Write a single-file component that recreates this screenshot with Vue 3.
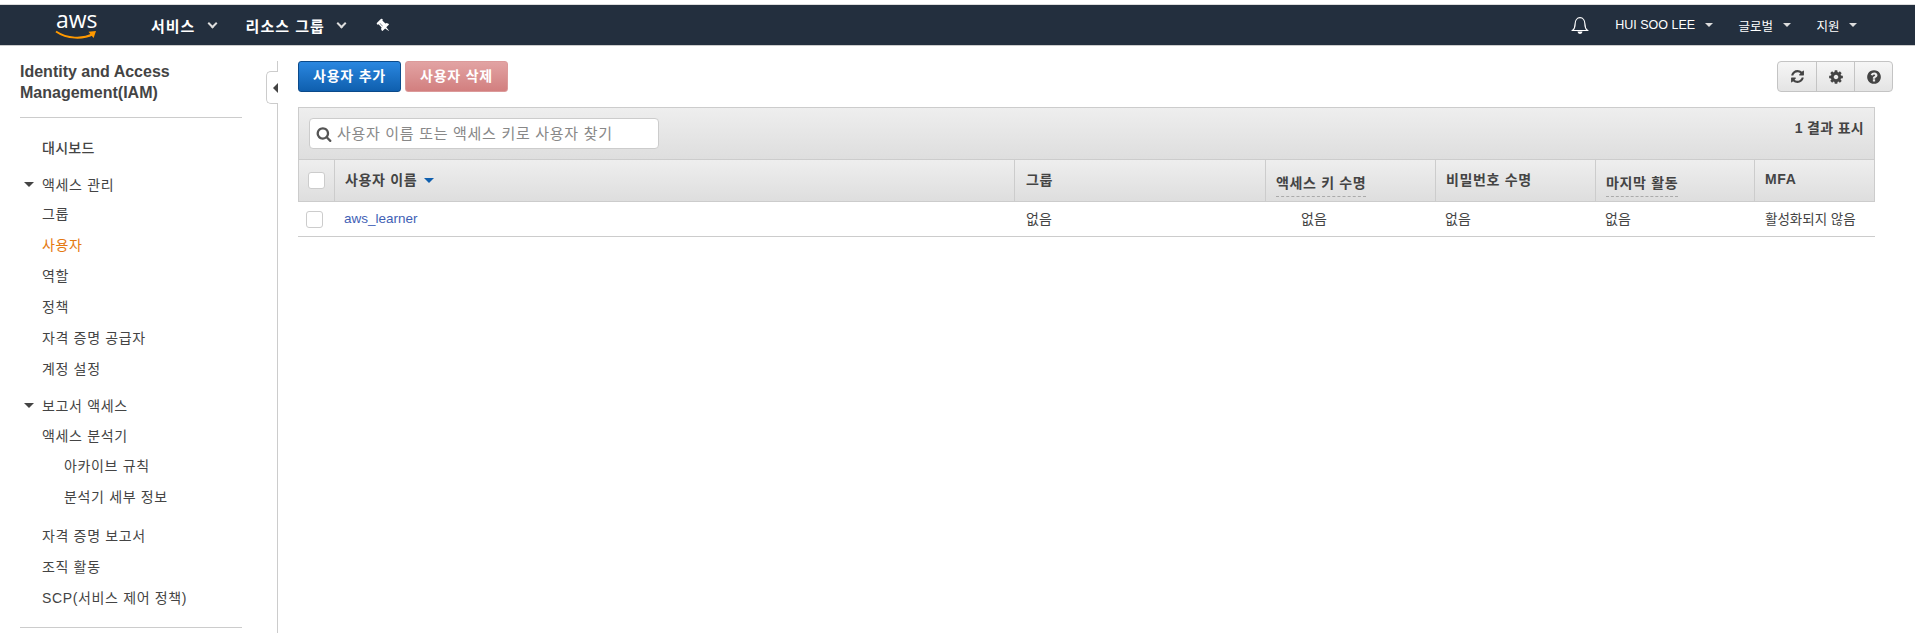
<template>
  <div class="page">
    <header class="topbar">
      <div class="logo">
        <span class="logo-text">aws</span>
        <svg class="logo-smile" viewBox="0 0 42 10" width="42" height="10">
          <path d="M1 1.5C12 9 28 9.5 38 4" fill="none" stroke="#f90" stroke-width="2" />
          <path d="M33.5 1.8L41 1l-2.4 7z" fill="#f90" />
        </svg>
      </div>
      <a class="nav-link strong services">서비스 <i class="chevron"></i></a>
      <a class="nav-link strong groups">리소스 그룹 <i class="chevron"></i></a>
      <svg class="pin" viewBox="0 0 1792 1792" width="15" height="15">
        <path
          transform="rotate(-45 896 896)"
          fill="#fff"
          d="M800 864v-448q0-14-9-23t-23-9-23 9-9 23v448q0 14 9 23t23 9 23-9 9-23zm672 352q0 26-19 45t-45 19h-429l-51 483q-2 12-10.5 20.5t-20.5 8.5h-1q-27 0-32-27l-76-485h-404q-26 0-45-19t-19-45q0-123 78.5-221.5t177.5-98.5v-512q-52 0-90-38t-38-90 38-90 90-38h640q52 0 90 38t38 90-38 90-90 38v512q99 0 177.5 98.5t78.5 221.5z"
        />
      </svg>
      <div class="topbar-right">
        <svg class="bell" viewBox="0 0 18 20" width="18" height="20">
          <path d="M1.5 15.5c2-1.6 2.6-3.4 2.6-6.5 0-3.6 2-6.3 4.9-6.3s4.900 2.700 4.900 6.300c0 3.100.6 4.900 2.600 6.500z" fill="none" stroke="#fff" stroke-width="1.2" />
          <path d="M6.500 16.500a2.500 2.500 0 0 0 5 0z" fill="#fff" />
        </svg>
        <a class="nav-link small user">HUI SOO LEE <i class="caret"></i></a>
        <a class="nav-link small region">글로벌 <i class="caret"></i></a>
        <a class="nav-link small support">지원 <i class="caret"></i></a>
      </div>
    </header>

    <div class="body">
      <aside class="sidebar">
        <h1 class="side-title">Identity and Access Management(IAM)</h1>
        <div class="side-rule"></div>
        <div class="side-item dash">대시보드</div>

        <div class="side-head"><i class="tri"></i>액세스 관리</div>
        <div
          v-for="item in accessItems"
          :key="item"
          class="side-item"
          :class="{ active: item === '사용자' }"
        >{{ item }}</div>

        <div class="side-head second"><i class="tri"></i>보고서 액세스</div>
        <div class="side-item analyzer">액세스 분석기</div>
        <div class="side-item sub">아카이브 규칙</div>
        <div class="side-item sub">분석기 세부 정보</div>
        <div class="side-item after-sub">자격 증명 보고서</div>
        <div class="side-item">조직 활동</div>
        <div class="side-item">SCP(서비스 제어 정책)</div>
        <div class="side-rule bottom"></div>

        <div class="collapse-tab"><i class="tri-left"></i></div>
      </aside>

      <main class="content">
        <div class="actions">
          <button class="btn primary">사용자 추가</button>
          <button class="btn danger">사용자 삭제</button>
          <div class="tools">
            <button class="tool">
              <svg viewBox="0 0 1792 1792" width="15" height="15"><path fill="#444" d="M1639 1056q0 5-1 7-64 268-268 434.500t-478 166.500q-146 0-282.500-55t-243.500-157l-129 129q-19 19-45 19t-45-19-19-45v-448q0-26 19-45t45-19h448q26 0 45 19t19 45-19 45l-137 137q71 66 161 102t187 36q134 0 250-65t186-179q11-17 53-117 8-23 30-23h192q13 0 22.500 9.500t9.500 22.500zm25-800v448q0 26-19 45t-45 19h-448q-26 0-45-19t-19-45 19-45l138-138q-148-137-349-137-134 0-250 65t-186 179q-11 17-53 117-8 23-30 23h-199q-13 0-22.500-9.500t-9.500-22.500v-7q65-268 270-434.500t480-166.500q146 0 284 55.500t245 156.500l130-129q19-19 45-19t45 19 19 45z" /></svg>
            </button>
            <button class="tool">
              <svg viewBox="0 0 1792 1792" width="16" height="16"><path fill="#444" d="M1152 896q0-106-75-181t-181-75-181 75-75 181 75 181 181 75 181-75 75-181zm512-109v222q0 12-8 23t-20 13l-185 28q-19 54-39 91 35 50 107 138 10 12 10 25t-9 23q-27 37-99 108t-94 71q-12 0-26-9l-138-108q-44 23-91 38-16 136-29 186-7 28-36 28h-222q-14 0-24.500-8.500t-11.500-21.500l-28-184q-49-16-90-37l-141 107q-10 9-25 9-14 0-25-11-126-114-165-168-7-10-7-23 0-12 8-23 15-21 51-66.500t54-70.500q-27-50-41-99l-183-27q-13-2-21-12.500t-8-23.500v-222q0-12 8-23t19-13l186-28q14-46 39-92-40-57-107-138-10-12-10-24 0-10 9-23 26-36 98.500-107.500t94.500-71.500q13 0 26 10l138 107q44-23 91-38 16-136 29-186 7-28 36-28h222q14 0 24.500 8.500t11.500 21.500l28 184q49 16 90 37l142-107q9-9 24-9 13 0 25 10 129 119 165 170 7 8 7 22 0 12-8 23-15 21-51 66.500t-54 70.500q26 50 41 98l183 28q13 2 21 12.500t8 23.500z" /></svg>
            </button>
            <button class="tool">
              <svg viewBox="0 0 1792 1792" width="16" height="16"><path fill="#444" d="M1024 1376v-192q0-14-9-23t-23-9h-192q-14 0-23 9t-9 23v192q0 14 9 23t23 9h192q14 0 23-9t9-23zm256-672q0-88-55.500-163t-138.500-116-170-41q-243 0-371 213-15 24 8 42l132 100q7 6 19 6 16 0 25-12 53-68 86-92 34-24 86-24 48 0 85.500 26t37.500 59q0 38-20 61t-68 45q-63 28-115.500 86.500t-52.500 125.500v36q0 14 9 23t23 9h192q14 0 23-9t9-23q0-19 21.500-49.500t54.500-49.500q32-18 49-28.500t46-35 44.500-48 28-60.500 12.500-81zm384 192q0 209-103 385.500t-279.500 279.500-385.500 103-385.500-103-279.500-279.500-103-385.500 103-385.500 279.500-279.500 385.500-103 385.500 103 279.500 279.500 103 385.500z" /></svg>
            </button>
          </div>
        </div>

        <div class="table">
          <div class="filter-bar">
            <div class="search">
              <svg viewBox="0 0 1792 1792" width="16" height="16"><path fill="#555" d="M1216 832q0-185-131.500-316.500t-316.500-131.500-316.500 131.500-131.500 316.500 131.500 316.500 316.500 131.500 316.500-131.500 131.500-316.500zm512 832q0 52-38 90t-90 38q-54 0-90-38l-343-342q-179 124-399 124-143 0-273.500-55.500t-225-150-150-225-55.500-273.500 55.500-273.500 150-225 225-150 273.500-55.500 273.500 55.500 225 150 150 225 55.500 273.500q0 220-124 399l343 343q37 37 37 90z" /></svg>
              <span class="placeholder">사용자 이름 또는 액세스 키로 사용자 찾기</span>
            </div>
            <div class="result-count">1 결과 표시</div>
          </div>

          <div class="grid head">
            <div class="cell check"><span class="box"></span></div>
            <div class="cell">사용자 이름 <i class="sort"></i></div>
            <div class="cell group-head">그룹</div>
            <div class="cell"><span class="dashed">액세스 키 수명</span></div>
            <div class="cell">비밀번호 수명</div>
            <div class="cell"><span class="dashed">마지막 활동</span></div>
            <div class="cell mfa">MFA</div>
          </div>

          <div class="grid row">
            <div class="cell check"><span class="box"></span></div>
            <div class="cell"><a class="user-link">aws_learner</a></div>
            <div class="cell group-cell">없음</div>
            <div class="cell key-age">없음</div>
            <div class="cell">없음</div>
            <div class="cell">없음</div>
            <div class="cell mfa-state">활성화되지 않음</div>
          </div>
        </div>
      </main>
    </div>
  </div>
</template>

<script setup>
const accessItems = ['그룹', '사용자', '역할', '정책', '자격 증명 공급자', '계정 설정'];
</script>

<style>
html, body {
  margin: 0;
  background: #fff;
  overflow: hidden;
}
</style>

<style scoped>
.page {
  height: 633px;
  overflow: hidden;
  font-family: "Liberation Sans", "Noto Sans CJK KR", sans-serif;
  font-size: 14px;
  color: #444;
  padding-top: 4px;
  box-sizing: border-box;
}

.topbar {
  height: 42px;
  box-sizing: border-box;
  border-top: 1px solid #ddd;
  border-bottom: 1px solid #ccc;
  background: #232f3e;
  display: flex;
  align-items: center;
  color: #fff;
}

.logo {
  width: 42px;
  margin-left: 55px;
  position: relative;
  height: 36px;
}

.logo-text {
  position: absolute;
  left: 1px;
  top: -3px;
  font-family: "Open Sans", sans-serif;
  font-size: 23px;
  line-height: 30px;
  color: #fff;
}

.logo-smile {
  position: absolute;
  left: 0;
  top: 23px;
}

.nav-link {
  color: #fff;
  display: flex;
  align-items: center;
  white-space: pre;
}

.strong {
  font-size: 15px;
  font-weight: 700;
  letter-spacing: 1px;
}

.services {
  margin-left: 54px;
}

.groups {
  margin-left: 30px;
}

.chevron {
  width: 5px;
  height: 5px;
  border-right: 2px solid #ddd;
  border-bottom: 2px solid #ddd;
  transform: rotate(45deg);
  margin: -3px 0 0 8px;
}

.pin {
  margin-left: 31px;
}

.topbar-right {
  margin-left: auto;
  display: flex;
  align-items: center;
  padding-right: 58px;
}

.bell {
  margin-right: 26px;
}

.small {
  font-size: 12.5px;
}

.region {
  margin-left: 26px;
}

.support {
  margin-left: 26px;
}

.caret {
  width: 0;
  height: 0;
  border-left: 4px solid transparent;
  border-right: 4px solid transparent;
  border-top: 4px solid #ddd;
  margin-left: 6px;
}

.body {
  display: flex;
  height: 587px;
}

.sidebar {
  width: 278px;
  flex: none;
  box-sizing: border-box;
  border-right: 1px solid #ccc;
  padding: 0 35px 0 20px;
  position: relative;
  margin-top: 15px;
  height: 572px;
}

.side-title {
  margin: 0;
  font-size: 16px;
  line-height: 21px;
  font-weight: 700;
  color: #444;
}

.side-rule {
  height: 1px;
  background: #ccc;
  margin-top: 14px;
}

.side-rule.bottom {
  margin-top: 13px;
}

.side-item {
  height: 31px;
  line-height: 30px;
  padding-left: 22px;
  font-size: 14px;
  letter-spacing: 0.65px;
  color: #444;
  white-space: nowrap;
}

.side-item.dash {
  margin-top: 15px;
  font-weight: 500;
  letter-spacing: 0.3px;
}

.side-item.active {
  color: #e47911;
}

.side-item.analyzer {
  height: 30px;
}

.side-item.sub {
  padding-left: 44px;
}

.side-item.after-sub {
  margin-top: 8px;
}

.side-head {
  height: 30px;
  margin-top: 5px;
  font-size: 14px;
  letter-spacing: 0.65px;
  color: #444;
  display: flex;
  align-items: center;
  white-space: nowrap;
}

.side-head.second {
  height: 31px;
  margin-top: 5px;
  padding-bottom: 1px;
  box-sizing: border-box;
}

.tri {
  width: 0;
  height: 0;
  border-left: 5px solid transparent;
  border-right: 5px solid transparent;
  border-top: 5px solid #444;
  margin: 0 8px 0 4px;
}

.collapse-tab {
  position: absolute;
  right: -1px;
  top: 10px;
  width: 12px;
  height: 33px;
  box-sizing: border-box;
  background: #fff;
  border: 1px solid #ccc;
  border-right: none;
  border-radius: 5px 0 0 5px;
  display: flex;
  align-items: center;
  justify-content: flex-end;
}

.tri-left {
  width: 0;
  height: 0;
  border-top: 5px solid transparent;
  border-bottom: 5px solid transparent;
  border-right: 5px solid #444;
}

.content {
  flex: 1;
  padding: 15px 22px 0 20px;
  box-sizing: border-box;
}

.actions {
  display: flex;
  gap: 4px;
  height: 31px;
}

.btn {
  width: 103px;
  height: 31px;
  border-radius: 3px;
  font-family: inherit;
  font-size: 14px;
  font-weight: 700;
  letter-spacing: 0.8px;
  color: #fff;
  padding: 0 0 3px;
}

.primary {
  background: linear-gradient(#2a87e0, #0f5fae);
  border: 1px solid #0b4a8a;
}

.danger {
  background: linear-gradient(#e2a3a3, #d27f7f);
  border: 1px solid #dc9a9a;
}

.tools {
  margin-left: auto;
  display: flex;
  height: 31px;
  border: 1px solid #c4c4c4;
  border-radius: 4px;
  box-sizing: border-box;
  overflow: hidden;
  background: linear-gradient(#f6f6f6, #e4e4e4);
}

.tool {
  width: 38px;
  height: 100%;
  border: none;
  border-left: 1px solid #c4c4c4;
  background: transparent;
  padding: 0;
  display: flex;
  align-items: center;
  justify-content: center;
}

.tool:first-child {
  border-left: none;
}

.table {
  margin-top: 15px;
  width: 1577px;
}

.filter-bar {
  height: 52px;
  box-sizing: border-box;
  border: 1px solid #ccc;
  border-bottom: none;
  background: linear-gradient(#eeeeee, #dedede);
  padding: 10px 10px 0 10px;
  display: flex;
  justify-content: space-between;
  align-items: flex-start;
}

.search {
  width: 350px;
  height: 31px;
  box-sizing: border-box;
  background: #fff;
  border: 1px solid #ccc;
  border-radius: 4px;
  display: flex;
  align-items: center;
  gap: 5px;
  padding-left: 6px;
  color: #888;
}

.placeholder {
  font-size: 15px;
  letter-spacing: 0.7px;
  padding-bottom: 3px;
}

.result-count {
  font-size: 14px;
  font-weight: 700;
  color: #444;
  letter-spacing: 0.3px;
  margin-top: -1px;
}

.grid {
  display: grid;
  grid-template-columns: 35px 680px 251px 170px 160px 160px 1fr;
}

.head {
  height: 43px;
  box-sizing: border-box;
  border: 1px solid #ccc;
  background: linear-gradient(#eeeeee, #dedede);
  font-weight: 700;
  color: #444;
  font-size: 14px;
  letter-spacing: 0.65px;
}

.head .cell {
  border-left: 1px solid #ccc;
  padding: 0 0 3px 10px;
}

.head .cell:first-child {
  border-left: none;
  padding: 0;
}

.head .group-head {
  padding-left: 11px;
}

.cell {
  display: flex;
  align-items: center;
  white-space: nowrap;
  min-width: 0;
}

.mfa {
  margin-left: -1px;
}

.check {
  justify-content: center;
}

.box {
  display: block;
  width: 15px;
  height: 15px;
  background: #fff;
  border: 1px solid #ccc;
  border-radius: 3px;
}

.sort {
  width: 0;
  height: 0;
  border-left: 5px solid transparent;
  border-right: 5px solid transparent;
  border-top: 5px solid #0f5fae;
  margin: 2px 0 0 7px;
}

.dashed {
  border-bottom: 1px dashed #aaa;
  padding: 3px 0 4px;
  margin-top: 7px;
}

.row {
  height: 35px;
  box-sizing: border-box;
  border-bottom: 1px solid #ccc;
  color: #444;
  font-size: 14px;
}

.row .cell {
  padding: 0 0 2px 11px;
}

.row .cell:first-child {
  padding: 0 2px 0 0;
}

.row .group-cell {
  padding-left: 13px;
}

.row .key-age {
  padding-left: 37px;
}

.row .mfa-state {
  font-size: 13.5px;
}

.user-link {
  color: #3f5fb5;
  font-size: 13.5px;
}
</style>
